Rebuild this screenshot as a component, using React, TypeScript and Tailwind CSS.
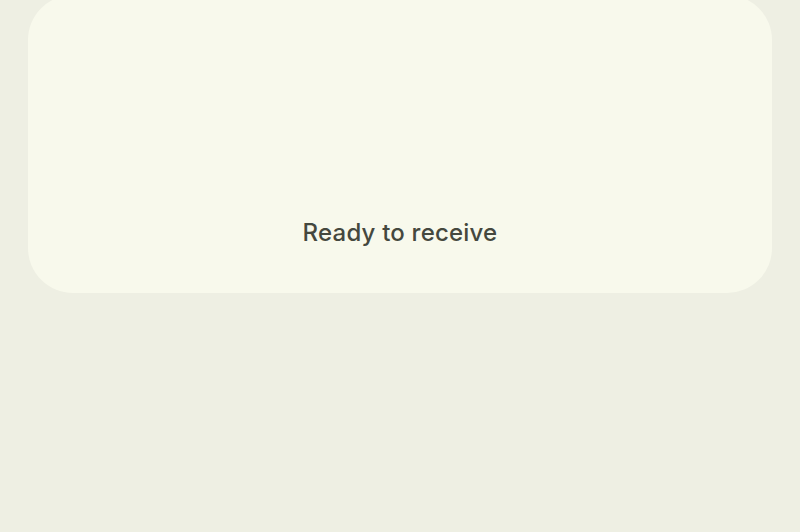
export default function App() {
  return (
    <div className="w-[800px] h-[532px] overflow-hidden bg-[#eeefe3]">
      <div className="mx-[28px] -mt-[5px] h-[298px] rounded-[45px] bg-[#f8f9ec] flex flex-col items-center justify-end pb-[44px]">
        <div
          className="text-[24px] leading-[32px] font-medium tracking-[0.2px] text-[#45483e]"
          style={{ fontFamily: 'Inter, "Open Sans", sans-serif' }}
        >
          Ready to receive
        </div>
      </div>
    </div>
  );
}
